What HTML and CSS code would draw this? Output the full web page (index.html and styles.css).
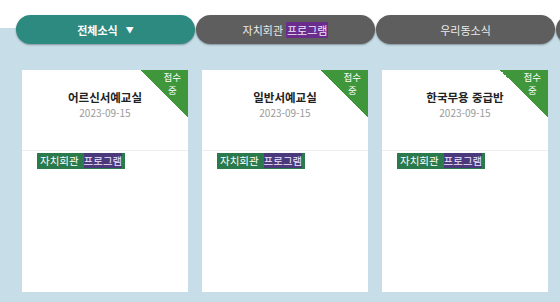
FILE: index.html
```html
<!DOCTYPE html>
<html lang="ko">
<head>
<meta charset="utf-8">
<link rel="stylesheet" href="styles.css">
</head>
<body>
<div class="page">
  <nav class="tabs">
    <div class="tab tab-active">전체소식 <span class="arrow">▼</span></div>
    <div class="tab">자치회관 <span class="hl">프로그램</span></div>
    <div class="tab">우리동소식</div>
    <div class="tab"></div>
  </nav>
  <div class="cards">
    <div class="card">
      <div class="badge"><div class="badge-text"><div class="badge-line">접수</div><div class="badge-line">중</div></div></div>
      <div class="card-head">
        <div class="title">어르신서예교실</div>
        <div class="date">2023-09-15</div>
      </div>
      <div class="card-body">
        <span class="tag">자치회관 <span class="tag-hl">프로그램</span></span>
      </div>
    </div>
    <div class="card">
      <div class="badge"><div class="badge-text"><div class="badge-line">접수</div><div class="badge-line">중</div></div></div>
      <div class="card-head">
        <div class="title">일반서예교실</div>
        <div class="date">2023-09-15</div>
      </div>
      <div class="card-body">
        <span class="tag">자치회관 <span class="tag-hl">프로그램</span></span>
      </div>
    </div>
    <div class="card">
      <div class="badge"><div class="badge-text"><div class="badge-line">접수</div><div class="badge-line">중</div></div></div>
      <div class="card-head">
        <div class="title">한국무용 중급반</div>
        <div class="date">2023-09-15</div>
      </div>
      <div class="card-body">
        <span class="tag">자치회관 <span class="tag-hl">프로그램</span></span>
      </div>
    </div>
  </div>
</div>
</body>
</html>
```
FILE: styles.css
```css
html, body {
  margin: 0;
  padding: 0;
}
body {
  width: 560px;
  height: 302px;
  overflow: hidden;
  font-family: "Noto Sans CJK KR", "Noto Sans", sans-serif;
}
.page {
  height: 302px;
  background: linear-gradient(#ffffff 0, #ffffff 28px, #c7dee9 28px);
  overflow: hidden;
}
.tabs {
  display: flex;
  gap: 1px;
  padding: 15px 0 0 16px;
  white-space: nowrap;
}
.tab {
  flex: 0 0 179px;
  height: 29px;
  border-radius: 15px;
  background: #5e5e5e;
  color: #ececec;
  font-size: 11px;
  display: flex;
  align-items: center;
  justify-content: center;
  box-shadow: 0 1px 2px rgba(0,0,0,0.35);
}
.tab-active {
  background: #2d8a80;
  color: #ffffff;
  font-weight: 700;
}
.arrow {
  font-size: 8px;
  margin-left: 8px;
}
.hl {
  background: #6a2d8c;
  color: #f0e6ff;
  padding: 0 1px;
  margin-left: 3px;
}
.cards {
  display: flex;
  gap: 14px;
  padding: 26px 0 0 22px;
}
.card {
  position: relative;
  flex: 0 0 166px;
  height: 222px;
  background: #ffffff;
  overflow: hidden;
}
.badge {
  position: absolute;
  top: 0;
  right: 0;
  width: 48px;
  height: 48px;
  background: linear-gradient(to bottom left, #3f963b 50%, transparent 50%);
}
.badge-text {
  position: absolute;
  top: 1px;
  right: 7px;
  color: #ffffff;
  font-size: 9.5px;
  text-align: center;
}
.badge-line {
  height: 13px;
  line-height: 13px;
}
.card-head {
  height: 81px;
  border-bottom: 1px solid #eeeeee;
  display: flex;
  flex-direction: column;
  align-items: center;
  padding-top: 19px;
  box-sizing: border-box;
}
.title {
  font-size: 11.5px;
  font-weight: 700;
  color: #222222;
  line-height: 16px;
}
.date {
  font-size: 10px;
  color: #999999;
  line-height: 14px;
  margin-top: 1px;
}
.card-body {
  display: flex;
  padding: 2px 0 0 15px;
}
.tag {
  display: block;
  background: #2b7a4b;
  color: #ffffff;
  font-size: 10.5px;
  line-height: 16px;
  padding: 0 3px;
}
.tag-hl {
  background: #4a3a7c;
  color: #efe6ff;
  margin-left: 2px;
}
```
